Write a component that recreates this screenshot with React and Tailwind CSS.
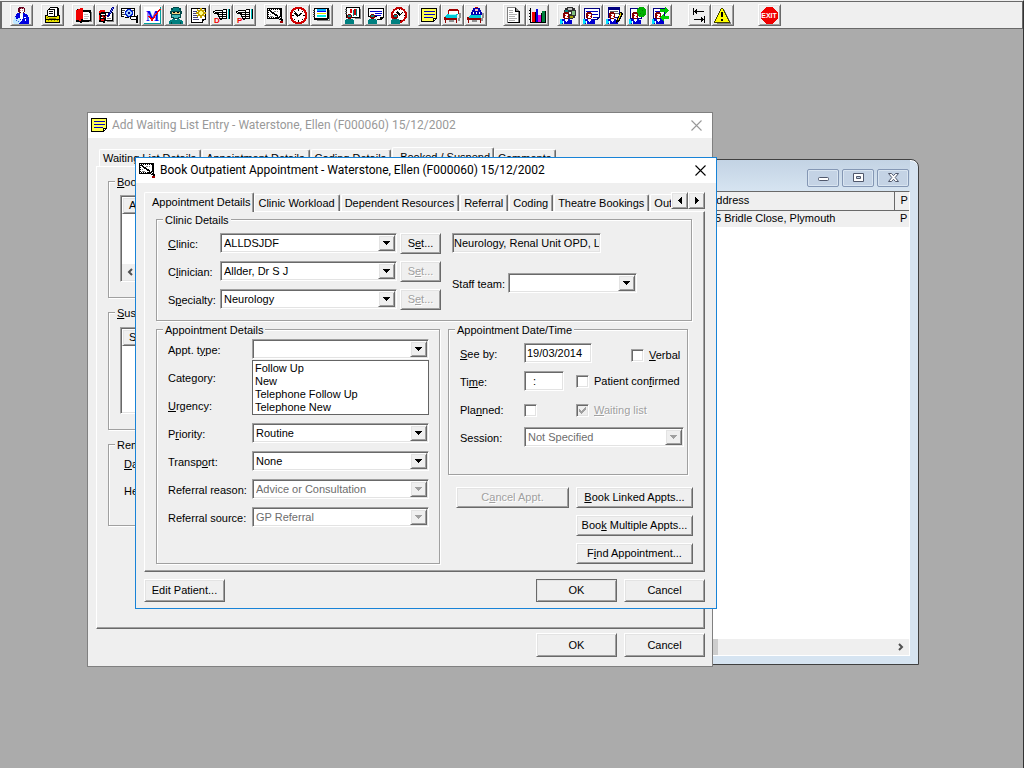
import React, { useState } from 'react';

const raised =
  'bg-[#efefef] border border-t-white border-l-white border-b-[#696969] border-r-[#696969] shadow-[inset_1px_1px_0_#e3e3e3,inset_-1px_-1px_0_#a0a0a0]';
const sunken =
  'p-px border border-t-[#a0a0a0] border-l-[#a0a0a0] border-b-white border-r-white shadow-[inset_1px_1px_0_#696969,inset_-1px_-1px_0_#e3e3e3]';

/* ---------- icons ---------- */

const Icon = ({ children }) => (
  <svg width="17" height="17" viewBox="0 0 17 17" shapeRendering="crispEdges" aria-hidden="true" className="shrink-0">
    {children}
  </svg>
);

// small person used in the corner of several icons
const TealPerson = () => (
  <>
    <path d="M4 7h3v1h1v3h-1v1h-3v-1h-1v-3h1z" fill="#800000" />
    <path d="M4 8h3v2h-3z" fill="#008080" />
    <path d="M2 12h7v1h1v4h-9v-4h1z" fill="#008080" />
  </>
);

const BluePerson = () => (
  <>
    <path d="M4 5h4v1h1v5h-1v1h-4v-1h-1v-5h1z" fill="#800000" />
    <path d="M5 7h3v4h-3z" fill="#fff" />
    <path d="M5 8h1v1h-1zM7 9h1v1h-1z" fill="#f00" />
    <path d="M2 12h8v1h2v4h-11v-4h1z" fill="#0000d0" />
    <path d="M5 12h3v2h-1v1h-1v-1h-1z" fill="#fff" />
    <path d="M0 12h2v2h1v2h-1v1h-2z" fill="#00e0ff" />
    <path d="M3 14h1v3h-1z" fill="#fff" />
  </>
);

const Hand = () => (
  <>
    <path d="M2 3h8v-1h4v10h-5v1h-2v-1h-1v-2h-1v-2h-1v-1h-3v-1h-1v-2h1z" fill="#000" />
    <path d="M2 4h7v1h-7v1h-1v-1h1zM10 3h3v2h-3zM6 6h3v1h-3zM10 6h3v1h-3zM6 8h3v1h-3zM10 8h3v1h-3zM7 10h2v1h-2zM10 10h3v1h-3z" fill="#fff" />
    <path d="M14 3h1v8h-1z" fill="#fff" />
    <path d="M15 2h1v10h-1z" fill="#00c0c0" />
    <path d="M16 2h1v10h-1z" fill="#000" />
  </>
);

const icons = {
  doctor: (
    <Icon>
      <path d="M6 0h5v1h1v4h-1v1h-5v-1h-1v-4h1z" fill="#600020" />
      <path d="M7 2h4v3h-1v1h-2v-1h-1z" fill="#fff" />
      <path d="M7 3h1v1h-1zM9 3h1v1h-1zM8 1h1v1h-1zM10 1h1v1h-1z" fill="#e08080" />
      <path d="M4 6h3v1h3v-1h2v1h2v1h1v2h1v7h-15v-5h1v-3h1v-2h1z" fill="#0000e0" />
      <path d="M7 7h3v5h-1v2h-1v-2h-1z" fill="#fff" />
      <path d="M1 10h2v2h2v-1h2v2h1v2h-1v1h-1v1h-5v-1h-1v-3h1z" fill="#c0e8ff" />
      <path d="M11 10h2v1h-2zM12 12h1v2h-1z" fill="#fff" />
      <path d="M3 13h1v1h-1zM5 14h1v1h-1z" fill="#4060e0" />
    </Icon>
  ),
  tray: (
    <Icon>
      <path d="M6 0h8v1h1v9h-12v-7h1v-1h1v-1h1z" fill="#000" />
      <path d="M6 1h7v8h-2v-7h-5zM4 3h6v6h-6z" fill="#fff" />
      <path d="M5 4h4v1h-4zM5 6h4v1h-4z" fill="#000" />
      <path d="M1 8h3v1h9v-1h3v8h-15z" fill="#000" />
      <path d="M2 9h2v1h9v-1h2v3h-13zM2 13h13v2h-13z" fill="#e8e000" />
      <path d="M3 10h1v1h-1zM5 11h7v1h-7zM4 13h1v1h-1zM7 13h1v1h-1zM10 13h1v1h-1zM13 13h1v1h-1z" fill="#808000" />
    </Icon>
  ),
  redBook: (
    <Icon>
      <path d="M9 3h7v11h-9v2h-2v-1h-4v-12h1v-1h6v1z" fill="#000" />
      <path d="M8 5h6v1h1v7h-7z" fill="#fff" />
      <path d="M9 7h4v1h-4zM9 9h5v1h-5zM9 11h4v1h-4z" fill="#c0c0c0" />
      <path d="M16 5h1v10h-8v-1h7z" fill="#808080" />
      <path d="M1 3h2v-1h2v-1h3v11h-2v2h-2v-1h-3z" fill="#f00000" />
      <path d="M2 14h12v1h-12z" fill="#000" />
    </Icon>
  ),
  writeBook: (
    <Icon>
      <path d="M1 4h6v1h8v9h-8v2h-2v-1h-4z" fill="#000" />
      <path d="M8 6h6v7h-6zM3 7h4v1h-4zM3 10h4v1h-4z" fill="#fff" />
      <path d="M2 3h5v2h-4v1h-2v-2h1zM1 8h1v5h-1zM3 12h3v2h-3z" fill="#f00000" />
      <path d="M14 0h2v2h-1v2h-1v2h-1v1h-1v2h-1v1h-2v-2h1v-2h1v-1h1v-2h1v-2h1z" fill="#000090" />
      <path d="M14 1h1v1h-1zM13 3h1v1h-1zM12 5h1v1h-1z" fill="#80a0ff" />
      <path d="M4 8h1v1h1v1h1v-1h1v-1h1v1h-1v1h-1v1h-2v-1h-1z" fill="#d00000" />
      <path d="M9 11h4v1h-4zM15 6h1v9h-7v-1h6z" fill="#808080" />
    </Icon>
  ),
  eyeDoc: (
    <Icon>
      <path d="M0 1h14v8h-1v-7h-12v7h-1z" fill="#000" />
      <path d="M1 2h12v7h-12z" fill="#fff" />
      <path d="M1 3h3v1h-3zM1 5h2v1h-2zM1 7h3v1h-3zM11 3h2v1h-2z" fill="#404040" />
      <path d="M6 2h4v1h1v1h1v4h-1v1h-1v1h-4v-1h-1v-1h-1v-4h1v-1h1z" fill="#0020d0" />
      <path d="M6 4h1v-1h2v1h1v1h1v2h-1v1h-1v1h-2v-1h-1v-1h-1v-2h1z" fill="#a0d0ff" />
      <path d="M7 5h2v2h-2z" fill="#000080" />
      <path d="M9 9h7v-1h1v8h-2v-3h-5v-1h-1z" fill="#000" />
      <path d="M10 10h5v2h-5z" fill="#fff" />
      <path d="M0 9h3v1h-3zM4 10h4v1h-4z" fill="#000" />
    </Icon>
  ),
  mTick: (
    <Icon>
      <rect width="17" height="17" fill="#fff" />
      <path d="M16 0h1v17h-17v-1h16z" fill="#00a0a0" />
      <text x="2" y="14" fontFamily="Liberation Serif" fontSize="14" fontWeight="700" fill="#0000f0">M</text>
      <path d="M5 9l3 4l8-11" stroke="#f00000" strokeWidth="1.5" fill="none" />
    </Icon>
  ),
  surgeon: (
    <Icon>
      <path d="M6 0h6v1h2v3h1v3h-1v4h-2v1h-6v-1h-2v-4h-1v-3h1v-3h2z" fill="#004848" />
      <path d="M6 1h6v2h1v1h-9v-1h2z" fill="#008080" />
      <path d="M5 5h8v2h-8z" fill="#f0d080" />
      <path d="M6 5h2v1h-2zM10 5h2v1h-2z" fill="#000" />
      <path d="M5 8h8v2h-2v1h-4v-1h-2z" fill="#40b8b8" />
      <path d="M5 12h8v1h2v1h1v3h-14v-3h1v-1h2z" fill="#008080" />
      <path d="M8 12h2v1h-2z" fill="#fff" />
      <path d="M4 15h1v2h-1zM13 15h1v2h-1z" fill="#004848" />
    </Icon>
  ),
  starDoc: (
    <Icon>
      <path d="M1 1h15v12h-2v1h-1v2h-12z" fill="#000" />
      <path d="M2 2h13v10h-3v3h-10z" fill="#fff" />
      <path d="M3 4h4v1h-4zM3 6h3v1h-3zM3 8h4v1h-4zM3 10h5v1h-5zM3 12h6v1h-6z" fill="#404080" />
      <path d="M10 1h2v2h2v-1h1v2h-1v1h2v2h-2v1h1v2h-1v-1h-2v2h-2v-2h-2v1h-1v-2h1v-1h-2v-2h2v-1h-1v-2h1v1h2z" fill="#c0a000" />
      <path d="M10 4h2v1h1v2h-1v1h-2v-1h-1v-2h1z" fill="#ffff80" />
    </Icon>
  ),
  handD: (
    <Icon>
      <Hand />
      <text x="1" y="16" fontFamily="Liberation Sans" fontSize="8" fontWeight="700" fill="#f00000">D</text>
    </Icon>
  ),
  handP: (
    <Icon>
      <Hand />
      <text x="1" y="16" fontFamily="Liberation Sans" fontSize="8" fontWeight="700" fill="#f00000">P</text>
    </Icon>
  ),
  bookAppt: (
    <Icon>
      <path d="M0 1h15v11h-15z" fill="#000" />
      <path d="M2 3h11v7h-11z" fill="#fff" />
      <path d="M1 2h1v1h-1zM3 2h1v1h-1zM5 2h1v1h-1zM7 2h1v1h-1zM9 2h1v1h-1zM11 2h1v1h-1zM1 4h1v1h-1zM1 6h1v1h-1zM1 8h1v1h-1zM1 10h1v1h-1zM3 10h1v1h-1zM5 10h1v1h-1zM7 10h1v1h-1z" fill="#fff" />
      <path d="M7 4h2v1h-2zM10 4h1v1h-1zM3 7h1v1h-1zM3 9h3v1h-3z" fill="#808080" />
      <path d="M2 3h2v1h1v1h2v1h1v1h2v1h1v1h2v1h2v2h1v2h-2v-1h-2v-1h-1v-1h-1v-2h-2v-1h-1v-1h-2v-1h-1v-1h-1v-1h-1z" fill="#000" />
      <path d="M11 9h1v1h-1zM12 11h1v1h-1zM13 10h1v1h-1z" fill="#fff" />
      <path d="M14 12h1v2h-1z" fill="#000" />
      <path d="M13 14h3v2h-3z" fill="#a00000" />
    </Icon>
  ),
  clock: (
    <Icon>
      <path d="M5 0h7v1h2v1h1v1h1v2h1v7h-1v2h-1v1h-1v1h-2v1h-7v-1h-2v-1h-1v-1h-1v-2h-1v-7h1v-2h1v-1h1v-1h2z" fill="#d00000" />
      <path d="M6 2h5v1h2v1h1v2h1v5h-1v2h-1v1h-2v1h-5v-1h-2v-1h-1v-2h-1v-5h1v-2h1v-1h2z" fill="#fff" />
      <path d="M8 2h1v2h-1zM8 13h1v2h-1zM2 8h2v1h-2zM13 8h2v1h-2zM4 4h1v1h-1zM12 4h1v1h-1zM4 12h1v1h-1zM12 12h1v1h-1z" fill="#000" />
      <path d="M5 5h1v1h1v1h1v1h1v-1h1v-1h2v1h-1v1h-1v1h-2v1h-1v-1h-1v-1h-1v-1h-1z" fill="#000" />
    </Icon>
  ),
  planner: (
    <Icon>
      <path d="M1 1h15v11h-1v1h-14z" fill="#000" />
      <path d="M16 3h1v11h-13v-1h12z" fill="#808080" />
      <path d="M2 2h12v9h-12z" fill="#fff" />
      <path d="M0 3h2v1h-2zM0 5h2v1h-2zM0 7h2v1h-2zM0 9h2v1h-2z" fill="#404040" />
      <path d="M4 2h9v2h-9z" fill="#00b0ff" />
      <path d="M4 4h9v1h-9z" fill="#0000ff" />
      <path d="M4 6h9v1h-9z" fill="#e8e000" />
      <path d="M4 8h9v2h-9z" fill="#00e8e8" />
    </Icon>
  ),
  personBooks: (
    <Icon>
      <path d="M2 0h14v11h-14z" fill="#000" />
      <path d="M3 1h12v9h-12z" fill="#fff" />
      <path d="M16 2h1v10h-6v-1h5z" fill="#808080" />
      <path d="M6 2h2v4h-2z" fill="#e00000" />
      <path d="M9 3h1v6h-1zM12 2h1v7h-1z" fill="#008080" />
      <path d="M10 2h2v6h-2z" fill="#c00000" />
      <path d="M1 2h2v1h-2zM1 4h2v1h-2zM1 6h2v1h-2z" fill="#606060" />
      <TealPerson />
    </Icon>
  ),
  personDoc: (
    <Icon>
      <path d="M1 1h16v10h-1v1h-1v1h-5v-3h-9z" fill="#000" />
      <path d="M2 2h14v8h-3v2h-3v-3h-8z" fill="#fff" />
      <path d="M3 4h12v1h-12zM8 6h7v1h-7zM8 8h6v1h-6z" fill="#0000d0" />
      <TealPerson />
    </Icon>
  ),
  personClock: (
    <Icon>
      <circle cx="9" cy="8" r="7" fill="#fff" stroke="#c00000" strokeWidth="2" />
      <path d="M7 4h1v1h1v1h1v1h1v-1h1v-1h1v1h-1v1h-1v1h-1v1h-1v-1h-1v-1h-1v-1h-1z" fill="#000" />
      <path d="M9 2h1v1h-1zM14 8h1v1h-1zM10 13h1v1h-1z" fill="#000" />
      <TealPerson />
    </Icon>
  ),
  note: (
    <Icon>
      <path d="M0 1h16v11h-1v1h-1v1h-1v1h-13z" fill="#000" />
      <path d="M1 2h14v9h-3v3h-11z" fill="#ffff50" />
      <path d="M3 4h11v1h-11zM3 7h11v1h-11zM3 10h9v1h-9z" fill="#0000c0" />
      <path d="M13 12h1v1h-1z" fill="#fff" />
    </Icon>
  ),
  bed: (
    <Icon>
      <path d="M15 6h2v5h-1v3h-2v-3h1zM5 13h5v2h-5z" fill="#909090" />
      <path d="M4 3h1v-1h9v1h1v4h-1v-3h-9v3h-1z" fill="#a00000" />
      <path d="M5 4h9v3h-9z" fill="#fff" />
      <path d="M3 7h11v1h-1v3h-12v-2h1v-1h1z" fill="#00c8d8" />
      <path d="M5 7h7v1h-7z" fill="#a0ffff" />
      <path d="M0 10h2v1h11v5h-1v-3h-10v3h-1v-3h-1z" fill="#900000" />
    </Icon>
  ),
  patientBed: (
    <Icon>
      <path d="M15 6h2v5h-1v3h-2v-3h1zM5 13h5v2h-5z" fill="#909090" />
      <path d="M8 0h3v1h2v2h1v2h1v3h-11v-3h1v-2h1v-2h2z" fill="#0000b0" />
      <path d="M8 2h3v2h-3z" fill="#ffc0c0" />
      <path d="M6 5h1v2h-1zM12 5h1v2h-1zM9 5h1v2h-1z" fill="#fff" />
      <path d="M8 0h3v1h-3z" fill="#c00000" />
      <path d="M3 8h11v3h-12v-2h1z" fill="#00c8d8" />
      <path d="M0 10h2v1h12v5h-1v-3h-11v3h-1v-3h-1z" fill="#900000" />
    </Icon>
  ),
  page: (
    <Icon>
      <path d="M1 0h9v1h1v1h1v1h1v13h-12z" fill="#808080" />
      <path d="M2 1h7v4h3v10h-10z" fill="#fff" />
      <path d="M13 4h1v12h-12v-1h11zM9 1h1v3h3v1h-4z" fill="#000" />
      <path d="M3 3h4v1h-4zM3 5h4v1h-4zM3 7h8v1h-8zM3 9h6v1h-6zM3 11h8v1h-8zM3 13h6v1h-6z" fill="#b0b0b0" />
    </Icon>
  ),
  bars: (
    <Icon>
      <path d="M1 1h1v14h15v1h-16zM0 3h1v1h-1zM0 6h1v1h-1zM0 9h1v1h-1zM0 12h1v1h-1z" fill="#000" />
      <path d="M3 5h3v10h-3z" fill="#f00000" />
      <path d="M7 2h2v13h-2z" fill="#0000e0" />
      <path d="M9 8h3v7h-3z" fill="#e000e0" />
      <path d="M13 4h3v11h-3z" fill="#008040" />
      <path d="M6 5h1v10h-1zM12 6h1v9h-1zM16 4h1v11h-1z" fill="#000" />
    </Icon>
  ),
  cd: (
    <Icon>
      <path d="M7 0h6v1h2v2h1v6h-1v2h-2v1h-7v-2h-2v-7h1v-2h2z" fill="#303030" />
      <path d="M8 1h4v2h-4z" fill="#c0c0c0" />
      <path d="M5 3h3v3h-3z" fill="#008080" />
      <path d="M12 4h3v4h-3z" fill="#80c080" />
      <path d="M9 5h2v2h-2z" fill="#fff" />
      <path d="M10 9h3v2h-3z" fill="#a0a000" />
      <BluePerson />
    </Icon>
  ),
  personNote: (
    <Icon>
      <path d="M1 1h16v10h-1v1h-1v1h-14z" fill="#000080" />
      <path d="M2 2h14v8h-2v2h-12z" fill="#fff" />
      <path d="M3 4h12v1h-12zM9 7h6v1h-6zM10 10h4v1h-4z" fill="#0000c0" />
      <BluePerson />
    </Icon>
  ),
  personEdit: (
    <Icon>
      <path d="M2 0h12v11h-12z" fill="#000080" />
      <path d="M3 3h10v7h-10z" fill="#fff" />
      <path d="M4 4h8v1h-8zM9 6h4v1h-4z" fill="#606060" />
      <BluePerson />
      <path d="M14 5h2v1h1v2h-1v2h-1v2h-1v2h-1v1h-2v1h-1v-3h1v-2h1v-2h1v-2h1z" fill="#000" />
      <path d="M14 6h1v3h-1v2h-1v2h-1v-2h1v-3h1z" fill="#e8d000" />
    </Icon>
  ),
  personGlobe: (
    <Icon>
      <path d="M1 1h12v11h-12z" fill="#000080" />
      <path d="M2 2h10v9h-10z" fill="#fff" />
      <path d="M10 0h5v1h1v1h1v6h-1v1h-1v1h-5v-1h-1v-1h-1v-6h1v-1h1z" fill="#00b000" />
      <path d="M10 1h1v1h-1zM13 3h1v1h-1zM11 6h1v1h-1zM14 7h1v1h-1z" fill="#008000" />
      <BluePerson />
    </Icon>
  ),
  personArrows: (
    <Icon>
      <path d="M1 1h12v11h-12z" fill="#000080" />
      <path d="M2 2h10v9h-10z" fill="#fff" />
      <path d="M3 4h5v1h-5z" fill="#0000c0" />
      <BluePerson />
      <path d="M8 2h5v-2h1v1h1v1h1v1h1v1h-1v1h-1v1h-1v1h-1v-2h-5z" fill="#00c000" />
      <path d="M17 9h-5v-2h-1v1h-1v1h-1v1h-1v1h1v1h1v1h1v1h1v-2h5z" fill="#00d000" />
    </Icon>
  ),
  arrows: (
    <Icon>
      <path d="M2 1h1v7h-1zM3 4h1v-1h1v-1h1v2h7v1h-7v2h-1v-1h-1v-1h-1z" fill="#000" />
      <path d="M13 9h1v7h-1zM3 12h7v-2h1v1h1v1h1v1h-1v1h-1v1h-1v-2h-7z" fill="#000" />
    </Icon>
  ),
  warning: (
    <Icon>
      <path d="M8 2h2v1h1v2h1v2h1v2h1v2h1v2h1v2h1v2h-14v-1h13z" fill="#808080" />
      <path d="M7 1h2v1h1v2h1v2h1v2h1v2h1v2h1v2h1v2h-16v-2h1v-2h1v-2h1v-2h1v-2h1v-2h1v-2h1z" fill="#404000" />
      <path d="M7 2h2v2h1v2h1v2h1v2h1v2h1v2h1v1h-14v-1h1v-2h1v-2h1v-2h1v-2h1v-2h1z" fill="#ffff00" />
      <path d="M7 5h2v5h-2zM7 12h2v2h-2z" fill="#000" />
    </Icon>
  ),
  exit: (
    <Icon>
      <path d="M5 0h7v1h1v1h1v1h1v1h1v1h1v7h-1v1h-1v1h-1v1h-1v1h-1v1h-7v-1h-1v-1h-1v-1h-1v-1h-1v-1h-1v-7h1v-1h1v-1h1v-1h1v-1h1z" fill="#f00000" />
      <text x="8" y="11" textAnchor="middle" fontFamily="Liberation Sans" fontSize="7" fontWeight="700" fill="#fff">EXIT</text>
    </Icon>
  ),
};

const toolbarGroups = [
  ['doctor'],
  ['tray'],
  ['redBook', 'writeBook', 'eyeDoc', 'mTick', 'surgeon', 'starDoc', 'handD', 'handP'],
  ['bookAppt', 'clock', 'planner'],
  ['personBooks', 'personDoc', 'personClock'],
  ['note', 'bed', 'patientBed'],
  ['page', 'bars'],
  ['cd', 'personNote', 'personEdit', 'personGlobe', 'personArrows'],
  ['arrows', 'warning'],
  ['exit'],
];
const toolbarGaps = ['ml-2', 'ml-2', 'ml-2', 'ml-2', 'ml-2', 'ml-2', 'ml-4', 'ml-2', 'ml-4', 'ml-6'];

/* ---------- controls ---------- */

// "_" marks the letter that gets underlined
const Mnemonic = ({ text }) => {
  const i = text.indexOf('_');
  if (i < 0) return <>{text}</>;
  return (
    <>
      {text.slice(0, i)}
      <u className="underline-offset-1">{text[i + 1]}</u>
      {text.slice(i + 2)}
    </>
  );
};

const Button = ({ text, className, disabled }) => (
  <button
    type="button"
    disabled={disabled}
    className={`${raised} ${className} shrink-0 text-center whitespace-nowrap disabled:text-[#a0a0a0] disabled:[text-shadow:1px_1px_0_#fff]`}
  >
    <Mnemonic text={text} />
  </button>
);

const Combo = ({ id, value = '', className, disabled }) => (
  <div className={`${sunken} ${className} flex h-5 shrink-0 bg-white`}>
    <select
      id={id}
      defaultValue={value}
      disabled={disabled}
      className="min-w-0 flex-1 appearance-none pl-0.5 outline-none disabled:text-[#6d6d6d] disabled:opacity-100"
    >
      <option value={value}>{value}</option>
    </select>
    <span className={`${raised} pointer-events-none flex w-[17px] items-center justify-center`}>
      <svg width="7" height="4" viewBox="0 0 7 4" shapeRendering="crispEdges" aria-hidden="true">
        <path d="M0 0h7v1h-1v1h-1v1h-1v1h-1v-1h-1v-1h-1v-1h-1z" fill={disabled ? '#a0a0a0' : '#000'} />
      </svg>
    </span>
  </div>
);

const Row = ({ id, label, labelWidth, children }) => (
  <div className="flex h-5 items-center">
    <label htmlFor={id} className={`${labelWidth} shrink-0 pt-0.5 whitespace-nowrap`}>
      <Mnemonic text={label} />
    </label>
    {children}
  </div>
);

const Check = ({ id, label, checked, disabled, className = '' }) => (
  <span className={`${className} flex items-center gap-1`}>
    <span className="grid">
      <input
        id={id}
        type="checkbox"
        defaultChecked={checked}
        disabled={disabled}
        className={`${sunken} peer col-start-1 row-start-1 size-[13px] appearance-none bg-white disabled:bg-[#efefef]`}
      />
      <svg
        viewBox="0 0 13 13"
        shapeRendering="crispEdges"
        aria-hidden="true"
        className="pointer-events-none col-start-1 row-start-1 hidden size-[13px] peer-checked:block"
      >
        <path d="M3 5h1v1h1v1h1v-1h1v-1h1v-1h1v-1h1v3h-1v1h-1v1h-1v1h-1v1h-1v-1h-1v-1h-1z" fill={disabled ? '#a0a0a0' : '#000'} />
      </svg>
    </span>
    {label && (
      <label
        htmlFor={id}
        className={`pl-px whitespace-nowrap ${disabled ? 'text-[#a0a0a0] [text-shadow:1px_1px_0_#fff]' : ''}`}
      >
        <Mnemonic text={label} />
      </label>
    )}
  </span>
);

const Group = ({ title, className, children }) => (
  <fieldset
    className={`${className} min-w-0 border border-[#a0a0a0] pl-[11px] shadow-[1px_1px_0_#fff,inset_1px_1px_0_#fff]`}
  >
    <legend className="-ml-[5px] bg-[#efefef] px-0.5 pt-px leading-[12px]">
      <Mnemonic text={title} />
    </legend>
    {children}
  </fieldset>
);

const Tabs = ({ items, active, onSelect, className = '' }) => (
  <div role="tablist" className={`${className} relative z-10 -mb-px flex h-5 min-w-0 flex-1 items-start overflow-hidden`}>
    {items.map((t) => (
      <button
        key={t}
        type="button"
        role="tab"
        aria-selected={t === active}
        onClick={() => onSelect(t)}
        className={`shrink-0 rounded-t-xs border border-b-0 border-t-white border-l-white border-r-[#696969] bg-[#efefef] whitespace-nowrap shadow-[inset_-1px_0_0_#a0a0a0] ${
          t === active ? 'h-5 pr-[3px] pl-[7px]' : 'mt-0.5 mr-px h-[17px] pr-1 pl-[3px]'
        }`}
      >
        {t}
      </button>
    ))}
  </div>
);

const panel =
  'border border-t-white border-l-white border-b-[#696969] border-r-[#696969] shadow-[inset_-1px_-1px_0_#a0a0a0]';

const TitleBar = ({ icon, title, dim }) => (
  <header className={`flex h-[25px] items-center bg-white pl-[3px] font-['Roboto',sans-serif] text-[12px] ${dim ? 'text-[#999]' : 'text-black'}`}>
    {icon}
    <h2 className="ml-1 flex-1 whitespace-nowrap">{title}</h2>
    <button type="button" aria-label="Close" className="mr-[10px]">
      <svg width="11" height="11" viewBox="0 0 11 11" fill="none" stroke="currentColor" strokeWidth="1.1">
        <path d="M0.5 0.5l10 10M10.5 0.5l-10 10" />
      </svg>
    </button>
  </header>
);

/* ---------- windows ---------- */

const Toolbar = () => (
  <nav aria-label="Toolbar" className="flex h-7 items-center border border-l-2 border-[#696969] bg-[#efefef]">
    {toolbarGroups.map((group, i) => (
      <div key={i} className={`${toolbarGaps[i]} flex`}>
        {group.map((name) => (
          <button key={name} type="button" aria-label={name} className={`${raised} flex h-[22px] w-[23px] items-center justify-center`}>
            {icons[name]}
          </button>
        ))}
      </div>
    ))}
  </nav>
);

const PatientListWindow = () => (
  <section className="absolute top-[158px] left-[500px] isolate w-[419px] rounded-tr-lg border border-[#404040] bg-[#d6e4f1] p-2 pt-0 shadow-[inset_0_1px_0_#fff]">
    <header className="flex h-[31px] items-center justify-end gap-[3px] bg-linear-to-b from-[#c3d3e4] to-[#d6e4f1] pt-1 pr-px">
      {['Minimize', 'Restore', 'Close'].map((name) => (
        <button
          key={name}
          type="button"
          aria-label={name}
          className="flex h-[18px] w-8 items-center justify-center rounded-xs border border-[#8497b4] bg-[#c4d3e5] shadow-[inset_0_0_0_1px_#d9e5f1]"
        >
          <svg width="13" height="11" viewBox="0 0 13 11" fill="#fff" stroke="#50586c">
            {name === 'Minimize' && <rect x="1.5" y="5.5" width="10" height="3" rx="1" />}
            {name === 'Restore' && <path d="M1.500 1.500h10v8h-10zM4.500 4.500v2h4v-2z" fillRule="evenodd" />}
            {name === 'Close' && <path d="M1.500 1.500h3l2 2.200l2-2.200h3l-3.300 4l3.300 4h-3l-2-2.200l-2 2.200h-3l3.300-4z" />}
          </svg>
        </button>
      ))}
    </header>
    <div className="flex h-[465px] flex-col justify-between border border-t-[#696969] border-r-white border-b-white border-l-white bg-white">
      <table className="w-full table-fixed border-collapse text-left">
        <thead>
          <tr className="h-[18px] bg-[#efefef]">
            <th className="border-r border-b border-[#696969] pl-[199px] font-normal">Address</th>
            <th className="w-[15px] border-b border-[#696969] pl-[6px] font-normal">P</th>
          </tr>
        </thead>
        <tbody>
          <tr className="h-[17px] bg-[#efefef]">
            <td className="pl-[205px] whitespace-nowrap">5 Bridle Close, Plymouth</td>
            <td className="pl-[6px]">P</td>
          </tr>
        </tbody>
      </table>
      <div className="flex h-4 items-center justify-between bg-[#efefef]">
        <span className="h-4 w-[208px] bg-[#cdcdcd]" />
        <button type="button" aria-label="Scroll right" className="mr-1">
          <svg width="8" height="8" viewBox="0 0 8 8" fill="none" stroke="#505050" strokeWidth="2">
            <path d="M2 1l3 3l-3 3" />
          </svg>
        </button>
      </div>
    </div>
  </section>
);

const ListBox = ({ heading, scroll }) => (
  <div className={`${sunken} mr-3 flex h-[87px] flex-col bg-white`}>
    <div className={`${raised} h-[17px] pl-1.5 leading-[15px]`}>{heading}</div>
    {scroll && (
      <div className="mt-auto flex h-4 items-center bg-[#efefef] pl-1">
        <svg width="8" height="8" viewBox="0 0 8 8" fill="none" stroke="#505050" strokeWidth="2">
          <path d="M6 1l-3 3l3 3" />
        </svg>
      </div>
    )}
  </div>
);

const WaitingListWindow = () => {
  const [tab, setTab] = useState('Booked / Suspend');
  return (
    <section className="absolute top-[111px] left-[87px] isolate w-[626px] border border-[#808080] bg-[#efefef]">
      <TitleBar icon={icons.note} title="Add Waiting List Entry - Waterstone, Ellen (F000060) 15/12/2002" dim />
      <div className="pt-[9px] pr-[7px] pb-[9px] pl-2">
        <div className="flex">
          <Tabs
            className="pl-[3px]"
            items={['Waiting List Details', 'Appointment Details', 'Coding Details', 'Booked / Suspend', 'Comments']}
            active={tab}
            onSelect={setTab}
          />
        </div>
        <div className={`${panel} flex h-[463px] flex-col gap-2 px-[11px] pt-2`}>
          <Group title="_Bookings" className="pt-[7px] pb-[15px]">
            <ListBox heading="Appointment" scroll />
          </Group>
          <Group title="_Suspensions" className="pt-2 pb-[15px]">
            <ListBox heading="Start" />
          </Group>
          <Group title="Reminders" className="pt-[7px] pb-[27px]">
            <div className="flex flex-col gap-3.5 pl-1 leading-[13px]">
              <span><Mnemonic text="_Date:" /></span>
              <span>Held:</span>
            </div>
          </Group>
        </div>
        <div className="mt-1 flex justify-end gap-[7px]">
          <Button text="OK" className="h-6 w-[81px]" />
          <Button text="Cancel" className="h-6 w-[81px]" />
        </div>
      </div>
    </section>
  );
};

const ClinicDetails = () => (
  <Group title="Clinic Details" className="mr-px pt-[7px] pb-[11px]">
    <div className="flex gap-[11px]">
      <div className="flex flex-col gap-2">
        <Row id="clinic" label="_Clinic:" labelWidth="w-[52px]">
          <Combo id="clinic" value="ALLDSJDF" className="w-[177px]" />
          <Button text="S_et..." className="ml-[3px] h-[21px] w-[41px]" />
        </Row>
        <Row id="clinician" label="C_linician:" labelWidth="w-[52px]">
          <Combo id="clinician" value="Allder, Dr S J" className="w-[177px]" />
          <Button text="S_et..." className="ml-[3px] h-[21px] w-[41px]" disabled />
        </Row>
        <Row id="specialty" label="S_pecialty:" labelWidth="w-[52px]">
          <Combo id="specialty" value="Neurology" className="w-[177px]" />
          <Button text="S_et..." className="ml-[3px] h-[21px] w-[41px]" disabled />
        </Row>
      </div>
      <div className="flex flex-col gap-5">
        <input
          aria-label="Clinic description"
          readOnly
          value="Neurology, Renal Unit OPD, L"
          className={`${sunken} h-5 w-[149px] bg-[#efefef] pl-px`}
        />
        <Row id="team" label="Staff team:" labelWidth="w-14">
          <Combo id="team" className="w-[129px]" />
        </Row>
      </div>
    </div>
  </Group>
);

const apptTypes = ['Follow Up', 'New', 'Telephone Follow Up', 'Telephone New'];

const AppointmentDetails = () => (
  <Group title="Appointment Details" className="w-[284px] shrink-0 pt-[3px] pb-[35px]">
    <div className="flex flex-col gap-2">
      <div className="relative">
        <Row id="type" label="Appt. t_ype:" labelWidth="w-[84px]">
          <Combo id="type" className="w-[177px]" />
        </Row>
        {/* open list of the appointment types */}
        <ul role="listbox" aria-label="Appt. type" className="absolute top-[21px] left-[84px] z-10 w-[177px] border border-[#646464] bg-white pt-px pl-0.5 leading-[13px]">
          {apptTypes.map((t) => (
            <li key={t} role="option" aria-selected="false">{t}</li>
          ))}
        </ul>
      </div>
      <Row id="category" label="Cate_gory:" labelWidth="w-[84px]">
        <Combo id="category" className="w-[177px]" />
      </Row>
      <Row id="urgency" label="_Urgency:" labelWidth="w-[84px]">
        <Combo id="urgency" className="w-[177px]" />
      </Row>
      <Row id="priority" label="P_riority:" labelWidth="w-[84px]">
        <Combo id="priority" value="Routine" className="w-[177px]" />
      </Row>
      <Row id="transport" label="Transp_ort:" labelWidth="w-[84px]">
        <Combo id="transport" value="None" className="w-[177px]" />
      </Row>
      <Row id="reason" label="Referral reason:" labelWidth="w-[84px]">
        <Combo id="reason" value="Advice or Consultation" className="w-[177px]" disabled />
      </Row>
      <Row id="source" label="Referral source:" labelWidth="w-[84px]">
        <Combo id="source" value="GP Referral" className="w-[177px]" disabled />
      </Row>
    </div>
  </Group>
);

const AppointmentDate = () => (
  <Group title="Appointment Date/Time" className="mr-[5px] pt-[7px] pb-[27px]">
    <div className="flex flex-col gap-2">
      <Row id="seeby" label="_See by:" labelWidth="w-16">
        <input id="seeby" defaultValue="19/03/2014" className={`${sunken} h-5 w-[68px] bg-white pl-0.5`} />
        <Check id="verbal" label="_Verbal" className="ml-[39px] pt-1" />
      </Row>
      <Row id="time" label="Ti_me:" labelWidth="w-16">
        <input id="time" defaultValue=":" className={`${sunken} h-5 w-10 bg-white pl-2`} />
        <Check id="confirmed" label="Patient con_firmed" className="ml-3" />
      </Row>
      <Row id="planned" label="Pla_nned:" labelWidth="w-16">
        <Check id="planned" className="pt-0.5" />
        <Check id="waiting" label="_Waiting list" className="ml-[39px] pt-0.5" checked disabled />
      </Row>
      <Row id="session" label="Session:" labelWidth="w-16">
        <Combo id="session" value="Not Specified" className="w-40" disabled />
      </Row>
    </div>
  </Group>
);

const BookAppointmentWindow = () => {
  const [tab, setTab] = useState('Appointment Details');
  return (
    <section className="absolute top-[156px] left-[135px] isolate w-[582px] border border-[#1883d7] bg-[#efefef]">
      <TitleBar icon={icons.bookAppt} title="Book Outpatient Appointment - Waterstone, Ellen (F000060) 15/12/2002" />
      <div className="pt-[9px] pr-[11px] pb-1.5 pl-2">
        <div className="flex">
          <Tabs
            items={['Appointment Details', 'Clinic Workload', 'Dependent Resources', 'Referral', 'Coding', 'Theatre Bookings', 'Outcome']}
            active={tab}
            onSelect={setTab}
          />
          <button type="button" aria-label="Scroll tabs left" className={`${raised} flex h-[17px] w-[17px] items-center justify-center`}>
            <svg width="4" height="7" viewBox="0 0 4 7" shapeRendering="crispEdges">
              <path d="M4 0v7h-1v-1h-1v-1h-1v-1h-1v-1h1v-1h1v-1h1v-1z" />
            </svg>
          </button>
          <button type="button" aria-label="Scroll tabs right" className={`${raised} flex h-[17px] w-[17px] items-center justify-center`}>
            <svg width="4" height="7" viewBox="0 0 4 7" shapeRendering="crispEdges">
              <path d="M0 0v7h1v-1h1v-1h1v-1h1v-1h-1v-1h-1v-1h-1v-1z" />
            </svg>
          </button>
        </div>
        <div className={`${panel} flex flex-col gap-0.5 pt-px pr-[11px] pb-[7px] pl-[11px]`}>
          <ClinicDetails />
          <div className="flex gap-2">
            <AppointmentDetails />
            <div className="min-w-0 flex-1">
              <AppointmentDate />
              <div className="mt-3 flex justify-end gap-[7px]">
                <Button text="C_ancel Appt." className="h-[21px] w-[113px]" disabled />
                <div className="flex flex-col gap-[7px]">
                  <Button text="_Book Linked Appts..." className="h-[21px] w-[117px]" />
                  <Button text="Boo_k Multiple Appts..." className="h-[21px] w-[117px]" />
                  <Button text="F_ind Appointment..." className="h-[21px] w-[117px]" />
                </div>
              </div>
            </div>
          </div>
        </div>
        <div className="mt-[7px] flex gap-[7px]">
          <Button text="Edit Patient..." className="mr-auto h-[23px] w-[81px]" />
          <Button text="OK" className="h-[23px] w-[81px] outline outline-[#696969] -outline-offset-1" />
          <Button text="Cancel" className="h-[23px] w-[81px]" />
        </div>
      </div>
    </section>
  );
};

export default function App() {
  return (
    <main className="relative h-screen w-full overflow-hidden border-t border-r border-t-[#efefef] border-r-[#333] bg-[#ababab] font-['Liberation_Sans',Arial,sans-serif] text-[11px] leading-[13px] text-black">
      <Toolbar />
      <PatientListWindow />
      <WaitingListWindow />
      <BookAppointmentWindow />
    </main>
  );
}
